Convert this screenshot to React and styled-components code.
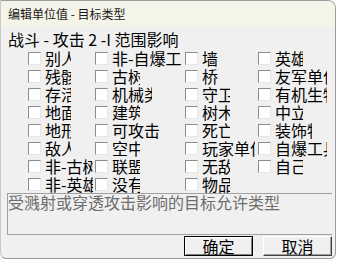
import styled, { createGlobalStyle } from 'styled-components';

const GlobalStyle = createGlobalStyle`
  body {
    margin: 0;
    background: #ffffff;
  }
`;

const columns = [
  [
    ['别人', 26], ['残骸', 26], ['存活', 26], ['地面', 26],
    ['地形', 26], ['敌人', 26], ['非-古树', 48], ['非-英雄', 48],
  ],
  [
    ['非-自爆工兵', 70], ['古树', 28], ['机械类', 40], ['建筑', 28],
    ['可攻击', 48], ['空中', 28], ['联盟', 28], ['没有', 28],
  ],
  [
    ['墙', 16], ['桥', 16], ['守卫', 28], ['树木', 28],
    ['死亡', 28], ['玩家单位', 53], ['无敌', 28], ['物品', 28],
  ],
  [
    ['英雄', 28], ['友军单位', 52], ['有机生物', 52], ['中立', 28],
    ['装饰物', 37], ['自爆工兵', 52], ['自己', 28],
  ],
];

export default function App() {
  return (
    <>
      <GlobalStyle />
      <Window>
        <TitleBar>编辑单位值 - 目标类型</TitleBar>
        <Body>
          <Heading>战斗 - 攻击 2 -I 范围影响</Heading>
          <Grid>
            {columns.flatMap((col, c) =>
              col.map(([label, width]) => (
                <Option key={c + label}>
                  <Box />
                  <Label $width={width}>{label}</Label>
                </Option>
              ))
            )}
          </Grid>
          <Description>受溅射或穿透攻击影响的目标允许类型</Description>
          <Buttons>
            <Button $default>确定</Button>
            <Button>取消</Button>
          </Buttons>
        </Body>
      </Window>
    </>
  );
}

const Window = styled.div`
  width: 336px;
  height: 259px;
  box-sizing: border-box;
  border: 1px solid #9c9c9c;
  border-left-color: #c8c8c8;
  border-radius: 0 8px 6px 6px;
  overflow: hidden;
  background: #f0f0f0;
  display: flex;
  flex-direction: column;
  font-family: "Noto Sans CJK SC", "Liberation Sans", sans-serif;
  color: #000;
`;

const TitleBar = styled.div`
  height: 25px;
  flex: none;
  background: #f5f4e8;
  padding-left: 7px;
  font-size: 12px;
  line-height: 25px;
  color: #1a1a1a;
`;

const Body = styled.div`
  display: flex;
  flex-direction: column;
  padding: 4px 3px 0 7px;
`;

const Heading = styled.div`
  width: 170px;
  font-size: 16px;
  line-height: 18px;
  white-space: nowrap;
  overflow: hidden;
`;

const Grid = styled.div`
  margin: 1px 0 0 20px;
  display: grid;
  grid-template-columns: 67px 90px 73px 1fr;
  grid-template-rows: repeat(8, 18px);
  grid-auto-flow: column;
`;

const Option = styled.label`
  display: flex;
  align-items: center;
  gap: 4px;
`;

const Box = styled.span`
  flex: none;
  width: 13px;
  height: 13px;
  box-sizing: border-box;
  background: #ffffff;
  border: 1px solid;
  border-color: #8c8c8c #e6e6e6 #e6e6e6 #8c8c8c;
`;

const Label = styled.span`
  width: ${p => p.$width}px;
  font-size: 16px;
  line-height: 18px;
  white-space: nowrap;
  overflow: hidden;
`;

const Description = styled.div`
  margin-left: -1px;
  height: 42px;
  box-sizing: border-box;
  border: 1px solid #a0a0a0;
  border-right: none;
  font-size: 16px;
  line-height: 17px;
  color: #6d6d6d;
`;

const Buttons = styled.div`
  display: flex;
  justify-content: flex-end;
  gap: 10px;
  margin-top: 1px;
`;

const Button = styled.button`
  width: 69px;
  height: 20px;
  padding: 0;
  box-sizing: border-box;
  background: #f0f0f0;
  font-family: inherit;
  font-size: 16px;
  line-height: 16px;
  color: #000;
  border: 1px solid;
  border-color: ${p => (p.$default ? '#000' : '#ffffff #404040 #404040 #ffffff')};
  box-shadow: ${p =>
    p.$default
      ? 'inset 1px 1px 0 #ffffff, inset -1px -1px 0 #808080'
      : 'inset -1px -1px 0 #a0a0a0'};
`;
